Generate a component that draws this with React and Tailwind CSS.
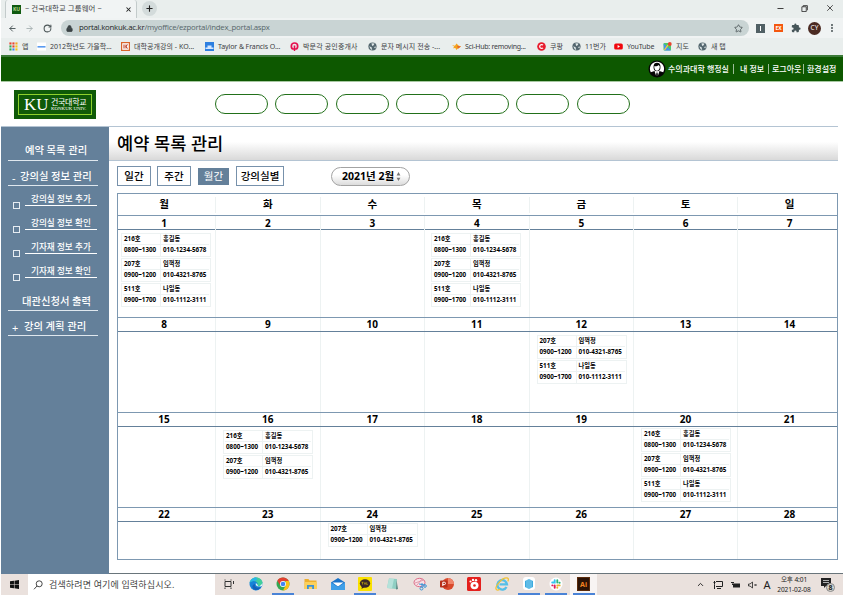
import React from "react";
import { ArrowLeft, ArrowRight, RotateCw, Lock, Star, Puzzle, MoreVertical, X, Plus, Minus, Search, ChevronUp } from "lucide-react";

const BOOKMARKS = [
  { icon: "apps", text: "앱", box: "w-[28px]", tw: "tracking-normal" },
  { icon: "naver", text: "2012학년도 가을학...", box: "w-[84px]", tw: "tracking-[-0.03px]" },
  { icon: "koc", text: "대학공개강의 - KO...", box: "w-[84px]", tw: "tracking-[0.05px]" },
  { icon: "taylor", text: "Taylor & Francis O...", box: "w-[85px]", tw: "tracking-[-0.1px]" },
  { icon: "pmg", text: "박문각 공인중개사", box: "w-[78px]", tw: "tracking-[0.15px]" },
  { icon: "globe", text: "문자 메시지 전송 -...", box: "w-[84px]", tw: "tracking-[0.05px]" },
  { icon: "hub", text: "Sci-Hub: removing...", box: "w-[85px]", tw: "tracking-[-0.25px]" },
  { icon: "coupang", text: "쿠팡", box: "w-[35px]", tw: "tracking-normal" },
  { icon: "globe", text: "11번가", box: "w-[42px]", tw: "tracking-normal" },
  { icon: "youtube", text: "YouTube", box: "w-[49px]", tw: "tracking-[-0.15px]" },
  { icon: "map", text: "지도", box: "w-[35px]", tw: "tracking-normal" },
  { icon: "globe", text: "새 탭", box: "w-[35px]", tw: "tracking-normal" },
];

function BookmarkIcon({ name }) {
  const svg = (children) => (
    <svg viewBox="0 0 9 9" className="h-[9px] w-[9px] shrink-0">{children}</svg>
  );
  if (name === "apps")
    return svg(
      ["#e8452f", "#e8452f", "#f5a623", "#34a853", "#e8452f", "#f5c518", "#34a853", "#4285f4", "#f5c518"].map((c, i) => (
        <rect key={i} x={(i % 3) * 3 + 0.4} y={Math.floor(i / 3) * 3 + 0.4} width="2.1" height="2.1" fill={c} />
      ))
    );
  if (name === "naver")
    return svg(<><rect y="0.5" width="9" height="8" fill="#fff" /><rect x="0.5" y="4" width="8" height="1.6" fill="#5a9bf0" /></>);
  if (name === "koc")
    return svg(<><rect x="0.6" y="0.6" width="7.8" height="7.8" fill="#fff" stroke="#d9652b" strokeWidth="1.2" /><path d="M3 2.5v4M5 2.5v4M5 4.5l1.5-2M5 4.5l1.5 2" stroke="#b8341b" strokeWidth="1" /></>);
  if (name === "taylor")
    return svg(<><rect width="9" height="9" fill="#2d7fe0" /><path d="M0.5 5.5h8V7h-8zM2.5 3.5h4v2h-4z" fill="#d5e7ff" /></>);
  if (name === "pmg")
    return svg(<><circle cx="4.5" cy="4.2" r="3.2" fill="none" stroke="#e5124f" strokeWidth="1.7" /><path d="M4.5 3.5V9" stroke="#e5124f" strokeWidth="1.6" /><path d="M3 7.5v1.5M6 7.5v1.5" stroke="#e8edec" strokeWidth="0.8" /></>);
  if (name === "globe")
    return svg(<><circle cx="4.5" cy="4.5" r="4.1" fill="#54676f" /><path d="M1.2 4.2l2.4 1 .6 2.8-1.5-.7zM3.5 1.2l3 .2-.8 1.8-1.6.8zM6 5l2-.6-.8 2.2z" fill="#dfe8e8" /></>);
  if (name === "hub")
    return svg(<><path d="M0 3L3 3.800l1.500-2.300 2 2L9 4.400 6.600 6 4.200 8 3.400 6 .8 6.200l1.500-1.400z" fill="#f5a21c" /><path d="M5 3.800L9 4.400 6 6.800z" fill="#e5662b" /></>);
  if (name === "coupang")
    return svg(<><circle cx="4.5" cy="4.5" r="4.3" fill="#e81c2e" /><path d="M6 3.2A1.9 1.9 0 1 0 6 5.8" stroke="#fff" strokeWidth="1.2" fill="none" /></>);
  if (name === "youtube")
    return svg(<><rect x="0.2" y="1.5" width="8.6" height="6" rx="1.6" fill="#f0060c" /><path d="M3.6 3.1v2.8L6 4.5z" fill="#fff" /></>);
  return svg(<><rect x="0.5" y="1" width="7.5" height="7.5" rx="1" fill="#4dc76b" /><path d="M0.5 1.5L8 8.5H1.5z" fill="#4a8df5" /><path d="M5 3l-3.5 5" stroke="#f7d23c" strokeWidth="1.3" /><circle cx="6.8" cy="2" r="1.9" fill="#e8452f" /></>);
}

function BrowserChrome() {
  return (
    <div className="h-[55px] bg-[#e9eeed] text-[#3c4043]">
      <div className="flex h-[18px] items-end">
        <div className="ml-[4px] flex h-[18px] w-[132px] items-center rounded-t-[3px] border-x border-[#c3cbcb] bg-[#f1f4f4] pl-[6px]">
          <div className="flex h-[9px] w-[9px] items-center justify-center bg-[#0f5a10] text-[5px] leading-none font-bold text-[#b7d98a]">KU</div>
          <span className="ml-[4px] w-[90px] text-[7.4px] leading-none tracking-[0.1px] whitespace-nowrap">~ 건국대학교 그룹웨어 ~</span>
          <X className="ml-[10px] h-[7px] w-[7px] text-[#222]" strokeWidth={3.5} />
        </div>
        <div className="mb-[2px] ml-[5px] flex h-[15px] w-[15px] items-center justify-center rounded-full bg-[#d3dbdb]">
          <Plus className="h-[9px] w-[9px] text-[#222]" strokeWidth={3} />
        </div>
        <div className="ml-auto flex h-full items-center pr-[8px] pb-[2px] text-[#333]">
          <Minus className="h-[9px] w-[9px]" strokeWidth={2.5} />
          <svg viewBox="0 0 8 8" className="ml-[16px] h-[7px] w-[7px]" fill="none" stroke="#333"><path d="M1 2h5v5.5H1zM2.5 2V.7H7.3V6" /></svg>
          <X className="ml-[17px] h-[10px] w-[10px]" strokeWidth={2} />
        </div>
      </div>
      <div className="flex h-[20px] items-center bg-[#f0f3f3]">
        <ArrowLeft className="ml-[7px] h-[9px] w-[9px] text-[#4b5557]" strokeWidth={2.5} />
        <ArrowRight className="ml-[8px] h-[9px] w-[9px] text-[#a9b2b3]" strokeWidth={2.5} />
        <RotateCw className="ml-[9px] h-[9px] w-[9px] text-[#4b5557]" strokeWidth={2.8} />
        <div className="ml-[9px] flex h-[16px] w-[688px] items-center rounded-full bg-[#c9d4d4] pl-[5px]">
          <Lock className="h-[7px] w-[7px] text-[#3c4446]" strokeWidth={3} fill="#3c4446" />
          <span className="ml-[6px] text-[7.8px] leading-none tracking-[-0.23px] whitespace-nowrap text-[#56666a] [font-family:'Open_Sans',sans-serif]">
            <span className="text-[#1c2526]">portal.konkuk.ac.kr</span>/myoffice/ezportal/index_portal.aspx
          </span>
          <Star className="mr-[6px] ml-auto h-[9px] w-[9px] text-[#4b5557]" strokeWidth={2.2} />
        </div>
        <div className="ml-[7px] flex h-[9px] w-[9px] items-center justify-center bg-[#516065]"><span className="h-[5px] w-px bg-white" /></div>
        <div className="ml-[9px] flex h-[8px] w-[9px] items-center justify-center bg-[#f4570f] text-[5px] leading-none font-bold text-white">EX</div>
        <svg viewBox="0 0 24 24" className="ml-[8px] h-[10px] w-[10px]" fill="#47565a"><path d="M20.500 11H19V7a2 2 0 0 0-2-2h-4V3.500a2.500 2.500 0 0 0-5 0V5H4a2 2 0 0 0-2 2v3.800h1.500a2.700 2.700 0 0 1 0 5.400H2V20a2 2 0 0 0 2 2h3.800v-1.500a2.700 2.700 0 0 1 5.400 0V22H17a2 2 0 0 0 2-2v-4h1.500a2.500 2.500 0 0 0 0-5z" /></svg>
        <div className="ml-[7px] flex h-[13px] w-[13px] items-center justify-center rounded-full bg-[#4b2a22] text-[6.5px] leading-none text-white">CY</div>
        <MoreVertical className="ml-[6px] h-[10px] w-[10px] text-[#4b5557]" strokeWidth={3} />
      </div>
      <div className="flex h-[16px] items-center pl-[8px]">
        {BOOKMARKS.map((b, i) => (
          <div key={i} className={`flex shrink-0 items-center ${b.box}`}>
            <BookmarkIcon name={b.icon} />
            <span className={`ml-[4px] text-[7px] leading-none whitespace-nowrap ${b.tw}`}>{b.text}</span>
          </div>
        ))}
      </div>
    </div>
  );
}

function TopBar() {
  return (
    <div className="flex h-[27px] items-center justify-end border-t-2 border-b border-t-[#3b7a38] border-b-[#a8c8a2] bg-[#0d5800] pr-[7px] text-[8px] leading-none font-medium whitespace-nowrap text-white">
      <svg viewBox="0 0 18 18" className="h-[18px] w-[18px]">
        <circle cx="9" cy="9" r="8.500" fill="#050505" />
        <path d="M2.800 12.300A7.100 7.100 0 1 1 15.200 12.300L11.500 11l-2.500 3-2.500-3z" fill="#fff" />
        <ellipse cx="9" cy="7" rx="3.500" ry="4.300" fill="#050505" />
        <path d="M6.200 6.200c1.800.3 3.700-.2 4.500-1.200l1.100 1.400c0 2.300-1.200 4.300-2.800 4.300S6.200 8.700 6.200 6.200z" fill="#fff" />
        <path d="M6.600 11.300L9 12.600l2.400-1.300-1.400 4.200H8z" fill="#fff" />
        <path d="M8.500 12.600h1l.5 3.200H8z" fill="#050505" />
      </svg>
      <span className="ml-[2px] w-[60px]">수의과대학 행정실</span>
      <span className="ml-[5px] h-[10px] w-px bg-[#9dbd98]" />
      <span className="ml-[6px] w-[23px]">내 정보</span>
      <span className="ml-[5px] h-[10px] w-px bg-[#9dbd98]" />
      <span className="ml-[3px] w-[29px]">로그아웃</span>
      <span className="ml-[2px] h-[10px] w-px bg-[#9dbd98]" />
      <span className="ml-[3px] w-[29px]">환경설정</span>
    </div>
  );
}

function Header() {
  return (
    <div className="flex h-[44px] items-start">
      <div className="mt-[8px] ml-[13px] h-[29px] w-[82px] bg-[#0f5a08] p-[4px]">
        <div className="flex h-full items-center border border-[#8fd12c] pl-[5px] text-white">
          <span className="w-[27px] text-[17px] leading-none [font-family:'Liberation_Serif',serif]">KU</span>
          <div className="flex flex-col pb-px whitespace-nowrap">
            <span className="text-[8px] leading-[9px] tracking-[-0.3px]">건국대학교</span>
            <span className="text-[4.9px] leading-[6px] [font-family:'Liberation_Serif',serif]">KONKUK UNIV.</span>
          </div>
        </div>
      </div>
      <div className="mt-[12px] ml-[119px] flex gap-[7.300px]">
        {Array.from({ length: 7 }, (_, i) => (
          <div key={i} className="h-[20px] w-[53px] rounded-full border-[1.500px] border-[#22701a]" />
        ))}
      </div>
    </div>
  );
}

function SideLink({ mark, text, className = "", textClass = "" }) {
  return (
    <div className={`mr-[11px] ml-[7px] flex items-end border-b-[1.500px] border-[#dfe7ee] ${className}`}>
      <span className="ml-[4px] w-[8px] shrink-0 text-[11px] leading-[14px]">{mark}</span>
      <span className={`text-[10.300px] leading-[15px] font-medium whitespace-nowrap ${textClass}`}>{text}</span>
    </div>
  );
}

function Sidebar() {
  return (
    <nav className="h-[447px] w-[108px] shrink-0 bg-[#64809a] text-white">
      <SideLink text="예약 목록 관리" className="mt-[14px] h-[20px]" textClass="ml-[5px] pb-[2px]" />
      <SideLink mark="-" text="강의실 정보 관리" className="mt-[4px] h-[21px]" textClass="pb-px" />
      <div className="mt-[7px] flex flex-col">
        {["강의실 정보 추가", "강의실 정보 확인", "기자재 정보 추가", "기자재 정보 확인"].map((t) => (
          <div key={t} className="flex h-[24px] items-start pl-[12px]">
            <span className="mt-[9px] h-[7px] w-[7px] border-[1.500px] border-[#e6ecf2]" />
            <span className="ml-[5px] h-[13px] w-[72px] border-b border-white pl-[6px] text-[8.600px] leading-[12px] font-medium whitespace-nowrap">{t}</span>
          </div>
        ))}
      </div>
      <SideLink text="대관신청서 출력" className="mt-[2px] h-[20px]" textClass="ml-[2px] pb-px" />
      <SideLink mark="+" text="강의 계획 관리" className="mt-[5px] h-[20px]" textClass="ml-[4px] pb-px" />
    </nav>
  );
}

const EVENTS = {
  a: { room: "216호", name: "홍길동", time: "0800~1300", phone: "010-1234-5678" },
  b: { room: "207호", name: "임꺽정", time: "0900~1200", phone: "010-4321-8765" },
  c: { room: "511호", name: "나일동", time: "0900~1700", phone: "010-1112-3111" },
};

const WEEKS = [
  { height: "h-[88px]", num: "leading-[14px]", first: 1, events: { 1: { list: "abc", pad: "pl-[3px] pt-[3px]" }, 4: { list: "abc", pad: "pl-[6px] pt-[3px]" } } },
  { height: "h-[81px]", num: "leading-[12px]", first: 8, events: { 12: { list: "bc", pad: "pl-[7px] pt-[3px]" } } },
  { height: "h-[81px]", num: "leading-[12px]", first: 15, events: { 16: { list: "ab", pad: "pl-[7px] pt-[3px]" }, 20: { list: "abc", pad: "pl-[7px] pt-[1px]" } } },
  { height: "h-[38px]", num: "leading-[12px]", first: 22, events: { 24: { list: "b", pad: "pl-[7px] pt-[1px]" } } },
];

const COLS = "grid grid-cols-[98px_104.500px_104.500px_104.500px_104.500px_104px_1fr]";

function EventCard({ event }) {
  return (
    <div className="h-[24px] w-[90px] border border-[#edf2f2] px-px text-[6.250px] leading-[10px] font-bold whitespace-nowrap text-black">
      <div className="flex h-[11px] border-b border-[#edf2f2]">
        <span className="w-[38px] border-r border-[#edf2f2] pl-px">{event.room}</span>
        <span className="pl-[2px]">{event.name}</span>
      </div>
      <div className="flex h-[11px]">
        <span className="w-[38px] border-r border-[#edf2f2] pl-px">{event.time}</span>
        <span className="pl-[2px]">{event.phone}</span>
      </div>
    </div>
  );
}

function Calendar() {
  return (
    <div className="ml-[8px] w-[721px] border-x border-t border-[#7d98b1]">
      <div className={`${COLS} h-[22px] items-center border-b border-[#7d98b1]`}>
        {["월", "화", "수", "목", "금", "토", "일"].map((d, i) => (
          <div key={d} className={`h-[16px] text-center text-[10.500px] leading-[14px] font-bold text-black ${i < 6 ? "border-r border-[#edf2f2]" : "pl-[4px]"} ${i === 0 ? "pr-[5px]" : ""}`}>{d}</div>
        ))}
      </div>
      {WEEKS.map((w) => (
        <div key={w.first}>
          <div className={`${COLS} h-[14px] border-b border-[#64809a]`}>
            {Array.from({ length: 7 }, (_, i) => (
              <div key={i} className={`text-center text-[10px] font-bold text-black [font-family:'Open_Sans','Noto_Sans',sans-serif] ${w.num} ${i < 6 ? "border-r border-[#edf2f2]" : "pl-[4px]"} ${i === 0 ? "pr-[5px]" : ""}`}>{w.first + i}</div>
            ))}
          </div>
          <div className={`${COLS} ${w.height} border-b border-[#7d98b1]`}>
            {Array.from({ length: 7 }, (_, i) => {
              const e = w.events[w.first + i];
              return (
                <div key={i} className={`flex flex-col gap-px ${i < 6 ? "border-r border-[#edf2f2]" : ""} ${e ? e.pad : ""}`}>
                  {e && e.list.split("").map((k) => <EventCard key={k} event={EVENTS[k]} />)}
                </div>
              );
            })}
          </div>
        </div>
      ))}
    </div>
  );
}

function Content() {
  const btn = "flex h-[20px] items-center justify-center border-[1.500px] border-[#7791ab] text-[10.500px] leading-none font-medium whitespace-nowrap text-black";
  return (
    <main className="w-[729px]">
      <div className="flex h-[34px] items-center border-b border-[#b4c4d3] bg-linear-to-b from-white from-45% to-[#d9d9d9] pl-[8px] text-[17.600px] leading-none font-medium whitespace-nowrap text-black">
        예약 목록 관리
      </div>
      <div className="flex h-[32px] items-center pb-[2px] pl-[8px]">
        <div className={`${btn} w-[34px]`}>일간</div>
        <div className={`${btn} ml-[6px] w-[34px]`}>주간</div>
        <div className="ml-[7px] flex h-[17px] w-[31px] items-center justify-center bg-[#64809a] text-[10.500px] leading-none text-white">월간</div>
        <div className={`${btn} ml-[7px] w-[48px]`}>강의실별</div>
        <div className="ml-[47px] flex h-[19px] w-[79px] items-center rounded-full border border-[#a3a3a3] bg-linear-to-b from-white from-40% to-[#dcdcdc] pl-[10px] text-[10.500px] leading-none font-bold whitespace-nowrap text-black">
          <span className="w-[53px]">2021년 2월</span>
          <svg viewBox="0 0 4 8" className="ml-[1px] h-[9px] w-[5px]" fill="#777"><path d="M2 0l1.700 3H.3zM2 8L.3 5h3.400z" /></svg>
        </div>
      </div>
      <Calendar />
    </main>
  );
}

const svgProps = { viewBox: "0 0 14 14", className: "h-[14px] w-[14px]" };

const APPS = [
  { id: "taskview", icon: <svg {...svgProps} fill="none" stroke="#333"><path d="M3 4.500h6v5H3zM3 2.500v1M9 2.500v1M3 10.500v1.500M9 10.500v1.500M11.500 4v3" /></svg> },
  { id: "edge", icon: <svg {...svgProps}><circle cx="7" cy="7" r="6.500" fill="#1783d8" /><path d="M.6 6C1.500 2 4.500.5 7 .5c4 0 6.500 2.700 6.500 5.500 0 2-1.500 3.300-3.500 3.300-1.500 0-2-.6-1.600-1.200C9.500 6 7 3.800 4.500 4 2.500 4.100 1.200 5 .6 6z" fill="#41cf9b" /><path d="M.6 6C1.500 2 4.500.5 7 .5L8.500 3 4.500 4C2.500 4.100 1.200 5 .6 6z" fill="#29b6e6" /><path d="M6 7c-1 2.500 2 5 6 3-2 3-6 4-8 1.500C2.500 9.500 4 7.300 6 7z" fill="#1560b8" /><path d="M7 6C5.800 8.500 9 10.500 13 9L14 6l-3.500 3.200c-1.500 0-2-.6-1.700-1.300z" fill="#e9f2f7" /></svg> },
  { id: "chrome", active: true, icon: <svg {...svgProps}><circle cx="7" cy="7" r="6.500" fill="#34a853" /><path d="M7 .5a6.500 6.500 0 0 1 5.800 3.600H7L4.300 8.500 1.300 3.800A6.500 6.500 0 0 1 7 .5z" fill="#e2402f" /><path d="M12.800 4.100A6.500 6.500 0 0 1 7 13.500l2.700-5L9.500 4.100z" fill="#fbc116" /><circle cx="7" cy="7" r="3" fill="#fff" /><circle cx="7" cy="7" r="2.300" fill="#4285f4" /></svg> },
  { id: "folder", icon: <svg {...svgProps}><path d="M.5 2h4l1 1.500h7V12H.5z" fill="#eeb02e" /><path d="M.5 5h12.500v7H.5z" fill="#fbd05c" /><path d="M3 12V8h7v4H8.200V9.800H4.800V12z" fill="#3c92d8" /></svg> },
  { id: "mail", icon: <svg {...svgProps}><path d="M0 5.500L7 1l7 4.500V13H0z" fill="#1a73c9" /><path d="M1.500 5.500h11L7 9.500z" fill="#fff" /><path d="M0 5.500l7 4.500 7-4.500V13H0z" fill="#3f9fe8" /></svg> },
  { id: "talk", active: true, icon: <svg {...svgProps}><rect width="14" height="14" rx="1" fill="#fae100" /><ellipse cx="7" cy="6.500" rx="5.200" ry="4.200" fill="#3a2529" /><path d="M4 9l-.5 3 3-2z" fill="#3a2529" /><path d="M3.500 5.300h2M4.500 5.300v2.200M6.300 7.500L7 5.500l.7 2M8.700 5.300v2.200h1" stroke="#fae100" strokeWidth=".5" fill="none" /></svg> },
  { id: "memo", icon: <svg {...svgProps}><path d="M4 1.500l8 .5-1 10-9-1z" fill="#8fcfc3" /><path d="M2 11L4 1.500l5 .3L7 11.500z" fill="#b5e2da" /><path d="M11.500 3L13 12l-2 .5z" fill="#5c8c86" /></svg> },
  { id: "snip", icon: <svg {...svgProps}><ellipse cx="6.500" cy="5.500" rx="5.500" ry="4.200" fill="#f7dfe5" stroke="#dc6a85" /><path d="M2 6l9-3M4 8l5-6" stroke="#dc8ea0" strokeWidth=".8" /><path d="M6 7l6 1M9 6v5" stroke="#3a93d6" /><circle cx="8.500" cy="11.500" r="1.500" fill="none" stroke="#3a93d6" /><circle cx="12" cy="9" r="1.300" fill="none" stroke="#3a93d6" /></svg> },
  { id: "ppt", icon: <svg {...svgProps}><circle cx="8" cy="7" r="6" fill="#d9492c" /><path d="M8 1a6 6 0 0 1 6 6H8z" fill="#f0846a" /><rect x="0" y="3.500" width="7.500" height="7" rx=".8" fill="#b82f1a" /><path d="M2.800 9V5.200h1.500a1.200 1.200 0 0 1 0 2.400H2.800" fill="none" stroke="#fff" /></svg> },
  { id: "viewer", icon: <svg {...svgProps}><rect width="14" height="14" rx="1.500" fill="#e4201d" /><ellipse cx="7.500" cy="8.500" rx="4" ry="3.700" fill="#fff" /><circle cx="3.500" cy="4.500" r="1.100" fill="#fff" /><circle cx="6" cy="2.900" r="1.200" fill="#fff" /><circle cx="9" cy="3.200" r="1.200" fill="#fff" /><circle cx="7.500" cy="8.500" r="1.300" fill="#e4201d" /></svg> },
  { id: "ie", icon: <svg {...svgProps}><path d="M11.500 10A4.800 4.800 0 1 1 12 7.300H4.500" fill="none" stroke="#54bfe8" strokeWidth="2.300" /><path d="M1.500 12.800C-1 10 8-1 12.800 1.200c1 .6.600 2.200 0 3.200M1.500 12.800c1 .6 2.500 0 3.500-.6" fill="none" stroke="#f1c232" strokeWidth="1.300" /></svg> },
  { id: "cloud", active: true, icon: <svg {...svgProps}><rect x="1" y="0" width="12" height="13" rx="3" fill="#fff" /><path d="M3 4l4-2 4 2v6l-4 2-4-2z" fill="#3aaadf" /><path d="M5 3v8M7 2v10M9 3v8" stroke="#a8ddf3" strokeWidth=".7" /></svg> },
  { id: "slack", active: true, icon: <svg {...svgProps}><circle cx="7" cy="7" r="6.500" fill="#fff" /><g strokeWidth="1.900" strokeLinecap="round"><path d="M5.700 3.300v2.200H3.200" stroke="#36c5f0" fill="none" /><path d="M8.300 3.300v2.300M10.700 5.700h-.3" stroke="#2eb67d" /><path d="M8.300 8.400h2.400M8.300 10.700v-.2" stroke="#ecb22e" /><path d="M5.700 8.400v2.300M3.300 8.400h.2" stroke="#e01e5a" /></g></svg> },
  { id: "ai", active: true, front: true, icon: <div className="flex h-[14px] w-[13px] items-center justify-center border border-[#5a2b0b] bg-[#2c1306] text-[7px] leading-none font-bold text-[#f58220]">Ai</div> },
];

function Taskbar() {
  return (
    <footer className="flex h-[22px] items-center border-t border-[#69757b] bg-[#eae1dd] text-[#222]">
      <div className="flex w-[27px] justify-center">
        <svg viewBox="0 0 10 10" className="h-[9px] w-[9px]" fill="#111"><path d="M0 1.400l4.400-.6v4H0zM5 .7L10 0v4.800H5zM0 5.300h4.400v4L0 8.700zM5 5.300h5V10l-5-.7z" /></svg>
      </div>
      <div className="flex h-full w-[187px] items-center bg-white pl-[5px]">
        <svg viewBox="0 0 10 10" className="h-[10px] w-[10px]" fill="none" stroke="#333" strokeWidth="0.9"><circle cx="6.200" cy="3.800" r="3" /><path d="M4 6L1 9.300" /></svg>
        <span className="ml-[6px] text-[9px] leading-none tracking-[0.150px] whitespace-nowrap text-[#444]">검색하려면 여기에 입력하십시오.</span>
      </div>
      {APPS.map((a) => (
        <div key={a.id} className={`flex h-full w-[27.300px] shrink-0 flex-col items-center pt-[3px] ${a.front ? "bg-[#f8f4f3]" : ""}`}>
          {a.icon}
          <span className={`mt-auto h-[2px] w-[22px] ${a.active ? "bg-[#4a83d6]" : ""}`} />
        </div>
      ))}
      <div className="mr-[8px] ml-auto flex items-center">
        <ChevronUp className="h-[9px] w-[9px]" strokeWidth={2.500} />
        <svg viewBox="0 0 10 10" className="ml-[8px] h-[10px] w-[10px]" fill="none" stroke="#222"><path d="M3 1.500h6.500v5H3M1.500 1v3.500M.5 2.500h2M1.500 4.500V9M4 8.500h4" /></svg>
        <svg viewBox="0 0 10 10" className="ml-[8px] h-[10px] w-[10px]" fill="#222"><path d="M1 3.500h8v4H2V5H1zM0 2h3v1H0z" /></svg>
        <svg viewBox="0 0 10 10" className="ml-[7px] h-[10px] w-[10px]" fill="none" stroke="#222" strokeWidth=".8"><path d="M.5 4h1.500l2.500-2v6L2 6H.5zM6.500 4l2 2M8.500 4l-2 2" /></svg>
        <span className="ml-[4px] w-[10px] text-center text-[11px] leading-none">A</span>
        <div className="ml-[4px] flex w-[36px] flex-col items-center text-[6.600px] leading-[10px] tracking-[-0.100px] whitespace-nowrap">
          <span>오후 4:01</span>
          <span>2021-02-08</span>
        </div>
        <div className="relative ml-[9px] h-[14px] w-[14px]">
          <svg viewBox="0 0 10 10" className="h-[10px] w-[10px]" fill="#222"><path d="M0 0h10v8H5L3 10V8H0z" /><path d="M2 2.500h6M2 4.500h6" stroke="#eee" strokeWidth=".7" /></svg>
          <span className="absolute right-0 bottom-0 flex h-[9px] w-[9px] items-center justify-center rounded-full border border-[#888] bg-[#d6d6d2] text-[7px] leading-none font-bold">8</span>
        </div>
      </div>
    </footer>
  );
}

export default function App() {
  return (
    <div className="h-[596px] w-[844px] overflow-hidden bg-white px-px [font-family:'Noto_Sans','Noto_Sans_CJK_KR',sans-serif]">
      <BrowserChrome />
      <TopBar />
      <Header />
      <div className="w-[837px] border-t border-[#b4c4d3]">
        <div className="flex h-[446px]">
          <Sidebar />
          <Content />
        </div>
      </div>
      <Taskbar />
    </div>
  );
}
